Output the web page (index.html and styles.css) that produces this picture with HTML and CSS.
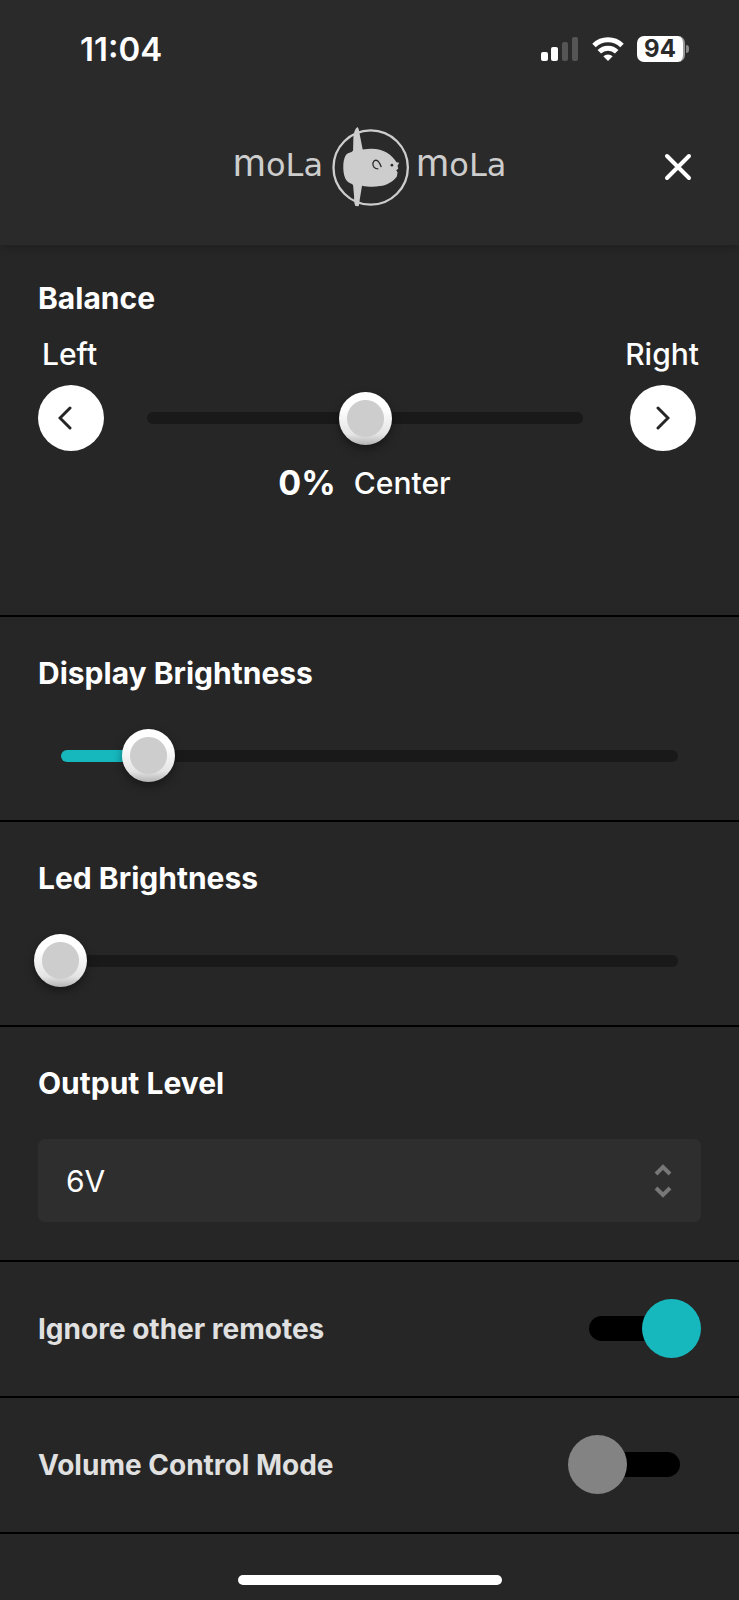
FILE: index.html
```html
<!DOCTYPE html>
<html lang="en">
<head>
  <meta charset="UTF-8">
  <meta name="viewport" content="width=device-width, initial-scale=1">
  <title>Settings</title>
  <link rel="stylesheet" href="styles.css">
</head>
<body>
  <header class="header">
    <div class="status-bar">
      <span class="time">11:04</span>
      <div class="status-icons">
        <svg width="38" height="26" viewBox="0 0 38 26" fill="#fff" aria-hidden="true">
          <rect x="0" y="16" width="7" height="9" rx="2"/>
          <rect x="10" y="11" width="7" height="14" rx="2"/>
          <rect x="21" y="6" width="6" height="19" rx="2" fill="#555"/>
          <rect x="31" y="1" width="6" height="24" rx="2" fill="#555"/>
        </svg>
        <svg width="32" height="26" viewBox="0 0 32 26" fill="none" stroke="#fff" stroke-width="5" aria-hidden="true">
          <path d="M2 9.500a20 20 0 0 1 28 0"/>
          <path d="M7.300 15.700a12.500 12.500 0 0 1 17.400 0"/>
          <path d="M16 25l-4.700-4.800a7 7 0 0 1 9.400 0z" fill="#fff" stroke="none"/>
        </svg>
        <div class="battery"><span class="battery-level">94</span></div>
      </div>
    </div>
    <div class="top-bar">
      <div class="logo">
        <span class="wordmark"><span class="big-m">m</span>oLa</span>
        <svg class="logo-fish" viewBox="21 15 240 250" fill="#cdcdcd" aria-hidden="true">
          <circle cx="140" cy="143" r="112" fill="none" stroke="#cdcdcd" stroke-width="7"/>
          <path d="M100 21C104 24 105 31 106 38L116 89C145 83 171 87 188 98C203 107 211 117 218 127L226 129L221 138L223 146L217 152L221 157L219 170C208 185 190 196 168 199C148 203 130 201 114 198L107 240C106 249 106 256 103 260L94 259C90 252 90 240 90 229L87 196C83 190 74 191 68 183C55 168 54 122 65 106C72 97 82 100 87 92L88 52C89 39 92 27 100 21Z"/>
          <path d="M163 147C151 147 145 139 147 129C150 119 159 119 164 126C168 131 170 136 172 142" fill="none" stroke="#2a2a2a" stroke-width="4"/>
          <circle cx="204" cy="136" r="4" fill="#2a2a2a"/>
        </svg>
        <span class="wordmark"><span class="big-m">m</span>oLa</span>
      </div>
      <button class="close-btn" aria-label="Close">
        <svg width="28" height="28" viewBox="0 0 28 28" fill="none" stroke="#fff" stroke-width="4" stroke-linecap="round" aria-hidden="true">
          <path d="M3 3l22 22M25 3L3 25"/>
        </svg>
      </button>
    </div>
  </header>

  <main>
    <section class="setting balance">
      <h2><label for="balance">Balance</label></h2>
      <div class="balance-labels"><span>Left</span><span>Right</span></div>
      <div class="balance-row">
        <button class="round-btn" aria-label="Left" onclick="stepBalance(-1)">
          <svg class="arrow-left" width="14" height="24" viewBox="0 0 14 24" aria-hidden="true"><path d="M12 2L2 12l10 10"/></svg>
        </button>
        <div class="slider">
          <div class="track"></div>
          <input type="range" id="balance" min="-50" max="50" value="0" oninput="showBalance()">
        </div>
        <button class="round-btn" aria-label="Right" onclick="stepBalance(1)">
          <svg width="14" height="24" viewBox="0 0 14 24" aria-hidden="true"><path d="M2 2l10 10L2 22"/></svg>
        </button>
      </div>
      <div class="balance-value"><strong id="percent">0%</strong><span id="side">Center</span></div>
    </section>

    <section class="setting">
      <h2><label for="display">Display Brightness</label></h2>
      <div class="slider">
        <div class="track"><div class="fill" style="width: 14.3%"></div></div>
        <input type="range" id="display" step="0.1" value="14.3" oninput="showFill(this)">
      </div>
    </section>

    <section class="setting">
      <h2><label for="led">Led Brightness</label></h2>
      <div class="slider">
        <div class="track"><div class="fill" style="width: 0%"></div></div>
        <input type="range" id="led" step="0.1" value="0" oninput="showFill(this)">
      </div>
    </section>

    <section class="setting">
      <h2><label for="level">Output Level</label></h2>
      <div class="select-box">
        <select id="level">
          <option>6V</option>
          <option>2V</option>
        </select>
        <svg class="select-arrows" width="18" height="36" viewBox="0 0 18 36" aria-hidden="true"><path d="M2 11l7-7 7 7M2 25l7 7 7-7"/></svg>
      </div>
    </section>

    <section class="setting toggle-row">
      <label for="ignore">Ignore other remotes</label>
      <input type="checkbox" class="toggle" id="ignore" checked>
    </section>

    <section class="setting toggle-row">
      <label for="volume">Volume Control Mode</label>
      <input type="checkbox" class="toggle" id="volume">
    </section>
  </main>

  <footer class="home"><div class="home-bar"></div></footer>

  <script>
    const balance = document.getElementById('balance');
    function showBalance() {
      const n = Number(balance.value);
      document.getElementById('percent').innerText = Math.abs(n) + '%';
      document.getElementById('side').innerText = n < 0 ? 'Left' : n > 0 ? 'Right' : 'Center';
    }
    function stepBalance(n) {
      balance.value = Number(balance.value) + n;
      showBalance();
    }
    function showFill(input) {
      input.previousElementSibling.firstElementChild.style.width = input.value + '%';
    }
  </script>
</body>
</html>
```
FILE: styles.css
```css
* { box-sizing: border-box; }
body {
  margin: 0; min-height: 100vh; display: flex; flex-direction: column;
  background: #262626; color: #fff;
  font-family: Inter, "Liberation Sans", sans-serif; font-size: 30px; line-height: 36px;
}
button { border: none; padding: 0; cursor: pointer; }

/* header */
.header { background: #2a2a2a; box-shadow: 0 2px 8px rgba(0, 0, 0, 0.2); }
.status-bar { display: flex; justify-content: space-between; align-items: center; height: 98px; padding: 0 50px 0 80px; }
.time { font-size: 33px; font-weight: 600; }
.status-icons { display: flex; align-items: center; gap: 13px; }
.battery { display: flex; align-items: center; gap: 1px; }
.battery::after { content: ""; width: 3px; height: 8px; border-radius: 0 4px 4px 0; background: #888; }
.battery-level {
  width: 48px; height: 26px; border-radius: 7px; border-right: 2px solid #999;
  background: #fff; color: #2a2a2a;
  font-size: 24px; font-weight: 700; line-height: 26px; text-align: center;
}
.top-bar { display: grid; grid-template-columns: 1fr auto 1fr; align-items: center; padding: 27px 38px 37px; }
.logo { grid-column: 2; display: flex; align-items: center; gap: 5px; }
.wordmark {
  padding-bottom: 6px; color: #cdcdcd;
  font-family: "DejaVu Sans", sans-serif; font-size: 32px;
}
.big-m { font-family: Inter, sans-serif; font-size: 38px; }
.logo-fish { width: 80px; height: 83px; margin-left: 3px; }
.close-btn { display: grid; place-items: center; justify-self: end; width: 46px; height: 46px; background: none; }

/* sections */
.setting { padding: 38px; border-bottom: 2px solid #000; }
h2 { margin: 0 0 38px; font-size: 30px; font-weight: 700; line-height: 36px; }
.balance { padding: 35px 38px 112px; font-weight: 500; }
.balance h2 { margin-bottom: 20px; }
.balance-labels { display: flex; justify-content: space-between; padding: 0 2px 0 4px; margin-bottom: 13px; }
.balance-row { display: flex; align-items: center; gap: 16px; padding-right: 5px; }
.balance-row .slider { flex: 1; margin: 0 4px 0 0; }
.balance-value { display: flex; justify-content: center; align-items: center; gap: 18px; height: 40px; margin-top: 12px; padding-right: 10px; }
.balance-value strong { font-size: 34px; font-weight: 700; }
.round-btn { display: grid; place-items: center; width: 66px; height: 66px; border-radius: 50%; background: #fff; }
.round-btn svg { fill: none; stroke: #262626; stroke-width: 3; stroke-linecap: round; }
.round-btn .arrow-left { margin-right: 12px; }

/* sliders: the range input lies in the same grid cell as its track */
.slider { display: grid; align-items: center; margin: 0 -4px; }
.slider > * { grid-area: 1 / 1; }
.track { height: 12px; margin: 0 27px; border-radius: 6px; background: #191919; overflow: hidden; }
.fill { height: 100%; background: #16b8be; }
input[type="range"] { -webkit-appearance: none; appearance: none; width: 100%; height: 53px; margin: 0; background: none; }
input[type="range"]::-webkit-slider-thumb {
  -webkit-appearance: none; width: 53px; height: 53px; border-radius: 50%;
  background:
    radial-gradient(circle, #cdcdcd 18px, transparent 19px),
    linear-gradient(#fff 30%, #e4e4e4 80%, #b4b4b4);
  box-shadow: 0 4px 10px rgba(0, 0, 0, 0.4);
}

/* select */
.select-box { display: grid; align-items: center; }
.select-box > * { grid-area: 1 / 1; }
select {
  -webkit-appearance: none; appearance: none; width: 100%; height: 83px; padding: 0 28px;
  border: none; border-radius: 7px; background: #2e2e2e; color: #fff; font: inherit;
}
.select-arrows { justify-self: end; margin-right: 29px; fill: none; stroke: #777; stroke-width: 4; pointer-events: none; }

/* toggles */
.toggle-row { display: flex; justify-content: space-between; align-items: center; padding-top: 37px; color: #e0e0e0; font-size: 28px; font-weight: 700; }
.toggle { -webkit-appearance: none; appearance: none; display: grid; align-items: center; width: 133px; height: 59px; margin: 0; }
.toggle::before, .toggle::after { content: ""; grid-area: 1 / 1; }
.toggle::before { height: 25px; margin: 0 21px; border-radius: 13px; background: #000; }
.toggle::after { width: 59px; height: 59px; border-radius: 50%; background: #838383; }
.toggle:checked::after { justify-self: end; background: #16b8be; }

.home { display: flex; justify-content: center; margin-top: auto; padding-bottom: 15px; }
.home-bar { width: 264px; height: 10px; border-radius: 5px; background: #fff; }
```
